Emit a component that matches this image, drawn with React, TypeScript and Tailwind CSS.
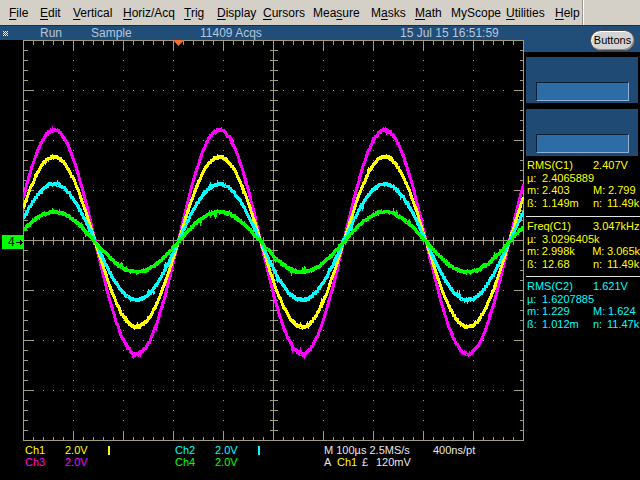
import React from "react";

const GRAT = "#a39d7f";

function mulberry32(seed: number) {
  let a = seed;
  return function () {
    a |= 0;
    a = (a + 0x6d2b79f5) | 0;
    let t = Math.imul(a ^ (a >>> 15), 1 | a);
    t = (t + Math.imul(t ^ (t >>> 7), 61 | t)) ^ t;
    return ((t ^ (t >>> 14)) >>> 0) / 4294967296;
  };
}

function wavePoints(amp: number, seed: number, noise: number, spikes: number) {
  const r = mulberry32(seed);
  const pts: string[] = [];
  for (let x = 0; x <= 500; x += 1) {
    const base = 201.5 - amp * Math.cos((2 * Math.PI * (x - 30.5)) / 165.5);
    let n = (r() - 0.5) * 2 * noise;
    if (r() < spikes) n += (r() < 0.5 ? -1 : 1) * (2 + r() * 3);
    pts.push(`${(x + 0.5).toFixed(1)},${Math.round(base + n) + 0.5}`);
  }
  return pts.join(" ");
}

function gratPaths() {
  let lines = "M0.5,0.5 H500.5 V400.5 H0.5 Z M250.5,0 V401 M0,200.5 H501 ";
  for (let i = 10; i < 500; i += 10) {
    if (i === 250) continue;
    const len = i % 50 === 0 ? 10 : 4;
    lines += `M${i + 0.5},0.5 V${0.5 + len} M${i + 0.5},400.5 V${400.5 - len} `;
    lines += `M${i + 0.5},${196.5} V${204.5} `;
  }
  for (let j = 10; j < 400; j += 10) {
    if (j === 200) continue;
    const len = j % 50 === 0 ? 10 : 4;
    lines += `M0.5,${j + 0.5} H${0.5 + len} M500.5,${j + 0.5} H${500.5 - len} `;
    lines += `M246.5,${j + 0.5} H254.5 `;
  }
  let dots = "";
  for (let x = 50; x < 500; x += 50) {
    if (x === 250) continue;
    for (let y = 10; y < 400; y += 10) {
      if (y === 200) continue;
      if (y <= 10 || y >= 390) continue;
      dots += `M${x},${y}h1v1h-1z`;
    }
  }
  for (let y = 50; y < 400; y += 50) {
    if (y === 200) continue;
    for (let x = 10; x < 500; x += 10) {
      if (x === 250 || x % 50 === 0) continue;
      if (x <= 10 || x >= 490) continue;
      dots += `M${x},${y}h1v1h-1z`;
    }
  }
  return { lines, dots };
}

function Scope() {
  const { lines, dots } = gratPaths();
  const waves = [
    { c: "#ff00ff", a: 112, s: 11 },
    { c: "#ffff00", a: 85, s: 22 },
    { c: "#00ffff", a: 58, s: 33 },
    { c: "#00ff00", a: 30, s: 44 },
  ];
  return (
    <svg width="501" height="401" viewBox="0 0 501 401" className="block">
      <g shapeRendering="crispEdges">
        <path d={lines} stroke={GRAT} strokeWidth="1" fill="none" />
        <path d={dots} fill={GRAT} />
      </g>
      {waves.map((w) => (
        <g key={w.c} shapeRendering="crispEdges">
          <polyline points={wavePoints(w.a, w.s, 1.0, 0)} fill="none" stroke={w.c} strokeWidth="3" strokeLinejoin="round" />
          <polyline points={wavePoints(w.a, w.s + 100, 1.8, 0.05)} fill="none" stroke={w.c} strokeWidth="1.5" />
        </g>
      ))}
      <polygon points="150,0 161,0 155.5,6" fill="#ff6c24" />
    </svg>
  );
}

const menus: { pre: string; u: string; post: string; w: number }[] = [
  { pre: "", u: "F", post: "ile", w: 31 },
  { pre: "", u: "E", post: "dit", w: 33 },
  { pre: "", u: "V", post: "ertical", w: 50 },
  { pre: "", u: "H", post: "oriz/Acq", w: 61 },
  { pre: "", u: "T", post: "rig", w: 33 },
  { pre: "", u: "D", post: "isplay", w: 46 },
  { pre: "", u: "C", post: "ursors", w: 50 },
  { pre: "Mea", u: "s", post: "ure", w: 58 },
  { pre: "M", u: "a", post: "sks", w: 44 },
  { pre: "", u: "M", post: "ath", w: 36 },
  { pre: "MyScope", u: "", post: "", w: 55 },
  { pre: "", u: "U", post: "tilities", w: 49 },
  { pre: "", u: "H", post: "elp", w: 28 },
];

function MenuBar() {
  return (
    <div className="h-[25px] bg-[#d4d0c8] flex">
      <div className="w-[583px] h-full flex items-center pl-[9px] border-r border-[#9a978f] text-[12px] text-black">
        {menus.map((m, i) => (
          <div key={i} style={{ width: m.w }} className="shrink-0 whitespace-nowrap">
            {m.pre}
            {m.u && <span className="underline underline-offset-[2px]">{m.u}</span>}
            {m.post}
          </div>
        ))}
      </div>
      <div className="w-px h-full bg-white" />
    </div>
  );
}

function StatusBar() {
  return (
    <div className="h-[14px] bg-[#214d79] flex items-center text-[12px] leading-[14px] text-[#b6c7da]">
      <div className="w-[40px] pl-[3px] flex items-center">
        <svg width="5" height="5" viewBox="0 0 5 5" shapeRendering="crispEdges">
          <path d="M0,0h1v1h-1z M2,0h1v1h-1z M4,0h1v1h-1z M1,1h1v1h-1z M3,1h1v1h-1z M0,2h1v1h-1z M2,2h1v1h-1z M4,2h1v1h-1z M1,3h1v1h-1z M3,3h1v1h-1z M0,4h1v1h-1z M2,4h1v1h-1z M4,4h1v1h-1z" fill="#e8eef5" />
        </svg>
      </div>
      <div className="w-[51px]">Run</div>
      <div className="w-[109px]">Sample</div>
      <div className="w-[200px]">11409 Acqs</div>
      <div>15 Jul 15 16:51:59</div>
    </div>
  );
}

function Ch4Marker() {
  return (
    <div className="ml-[2px] w-[21px] h-[14px] bg-[#00ff00] flex items-center pl-[6px] text-black text-[12px] leading-[14px]">
      <span>4</span>
      <svg width="7" height="7" viewBox="0 0 7 7" className="ml-[1px]" shapeRendering="crispEdges">
        <path d="M0,3h4v1h-4z" fill="#000" />
        <path d="M4,1 L7,3.5 L4,6 Z" fill="#000" />
      </svg>
    </div>
  );
}

function BottomInfo() {
  return (
    <div className="pt-[3px] text-[11px] leading-[12px]">
      <div className="flex pl-[25px] h-[12px]">
        <div className="w-[40px] text-[#ffff00]">Ch1</div>
        <div className="w-[43px] text-[#ffff00]">2.0V</div>
        <div className="w-[67px]">
          <div className="w-[2px] h-[9px] mt-[2px] bg-[#ffff00]" />
        </div>
        <div className="w-[40px] text-[#00ffff]">Ch2</div>
        <div className="w-[43px] text-[#00ffff]">2.0V</div>
        <div className="w-[66px]">
          <div className="w-[2px] h-[9px] mt-[2px] bg-[#00ffff]" />
        </div>
        <div className="w-[109px] text-[#e8e8e8] whitespace-nowrap">M 100µs 2.5MS/s</div>
        <div className="text-[#e8e8e8] whitespace-nowrap">400ns/pt</div>
      </div>
      <div className="flex pl-[25px] h-[12px]">
        <div className="w-[40px] text-[#ff00ff]">Ch3</div>
        <div className="w-[110px] text-[#ff00ff]">2.0V</div>
        <div className="w-[40px] text-[#00ff00]">Ch4</div>
        <div className="w-[109px] text-[#00ff00]">2.0V</div>
        <div className="w-[13px] text-[#e8e8e8]">A</div>
        <div className="w-[25px] text-[#ffff00]">Ch1</div>
        <div className="w-[14px] text-[#e8e8e8]">£</div>
        <div className="text-[#e8e8e8]">120mV</div>
      </div>
    </div>
  );
}

function Box({ h }: { h: string }) {
  return (
    <div className={`ml-[2px] w-[112px] ${h} bg-[#1f4a74] pt-[25px] pl-[10px]`}>
      <div className="w-[93px] h-[19px] bg-[#2e6ca5] border border-t-[#0b2036] border-l-[#0b2036] border-b-[#8fb2d4] border-r-[#8fb2d4]" />
    </div>
  );
}

type Meas = {
  color: string;
  title: string;
  value: string;
  mu: string;
  m: string;
  M: string;
  b: string;
  n: string;
};

function MeasBlock({ d }: { d: Meas }) {
  return (
    <div className={`pl-[3px] whitespace-nowrap ${d.color}`}>
      <div className="flex">
        <div className="w-[66px]">{d.title}</div>
        <div>{d.value}</div>
      </div>
      <div className="flex">
        <div className="w-[15px]">µ:</div>
        <div>{d.mu}</div>
      </div>
      <div className="flex">
        <div className="w-[15px]">m:</div>
        <div className="w-[51px]">{d.m}</div>
        <div className="w-[15px]">M:</div>
        <div>{d.M}</div>
      </div>
      <div className="flex">
        <div className="w-[15px]">ß:</div>
        <div className="w-[51px]">{d.b}</div>
        <div className="w-[14px]">n:</div>
        <div>{d.n}</div>
      </div>
    </div>
  );
}

function Measurements() {
  const data: Meas[] = [
    { color: "text-[#ffff00]", title: "RMS(C1)", value: "2.407V", mu: "2.4065889", m: "2.403", M: "2.799", b: "1.149m", n: "11.49k" },
    { color: "text-[#ffff00]", title: "Freq(C1)", value: "3.047kHz", mu: "3.0296405k", m: "2.998k", M: "3.065k", b: "12.68", n: "11.49k" },
    { color: "text-[#00ffff]", title: "RMS(C2)", value: "1.621V", mu: "1.6207885", m: "1.229", M: "1.624", b: "1.012m", n: "11.47k" },
  ];
  return (
    <div className="pt-[3px] text-[11px] leading-[12.5px] overflow-hidden">
      <MeasBlock d={data[0]} />
      <div className="ml-[2px] h-px bg-[#e4e4e4] mt-[7px] mb-[3px]" />
      <MeasBlock d={data[1]} />
      <div className="ml-[2px] h-px bg-[#e4e4e4] mt-[6px] mb-[3px]" />
      <MeasBlock d={data[2]} />
    </div>
  );
}

function RightPanel() {
  return (
    <div className="w-[116px] flex flex-col">
      <div className="h-[26px] bg-[#214d79] flex justify-end items-start pt-[4px] pr-[5px]">
        <div className="w-[45px] h-[21px] rounded-full bg-[#d4d4d4] border border-[#4a4a4a] shadow-[inset_1px_1px_0_#ffffff,inset_-1px_-1px_0_#8a8a8a] flex items-center justify-center text-[11px] text-black">
          Buttons
        </div>
      </div>
      <div className="h-[5px]" />
      <Box h="h-[46px]" />
      <div className="h-[6px]" />
      <Box h="h-[47px]" />
      <Measurements />
    </div>
  );
}

export default function App() {
  return (
    <div className="w-[640px] h-[480px] bg-black overflow-hidden font-['Liberation_Sans',Arial,sans-serif]">
      <MenuBar />
      <div className="h-px bg-[#2a2a2a]" />
      <div className="flex">
        <div className="w-[524px] flex flex-col">
          <StatusBar />
          <div className="flex">
            <div className="w-[23px] pt-[195px]">
              <Ch4Marker />
            </div>
            <Scope />
          </div>
          <BottomInfo />
        </div>
        <RightPanel />
      </div>
    </div>
  );
}
